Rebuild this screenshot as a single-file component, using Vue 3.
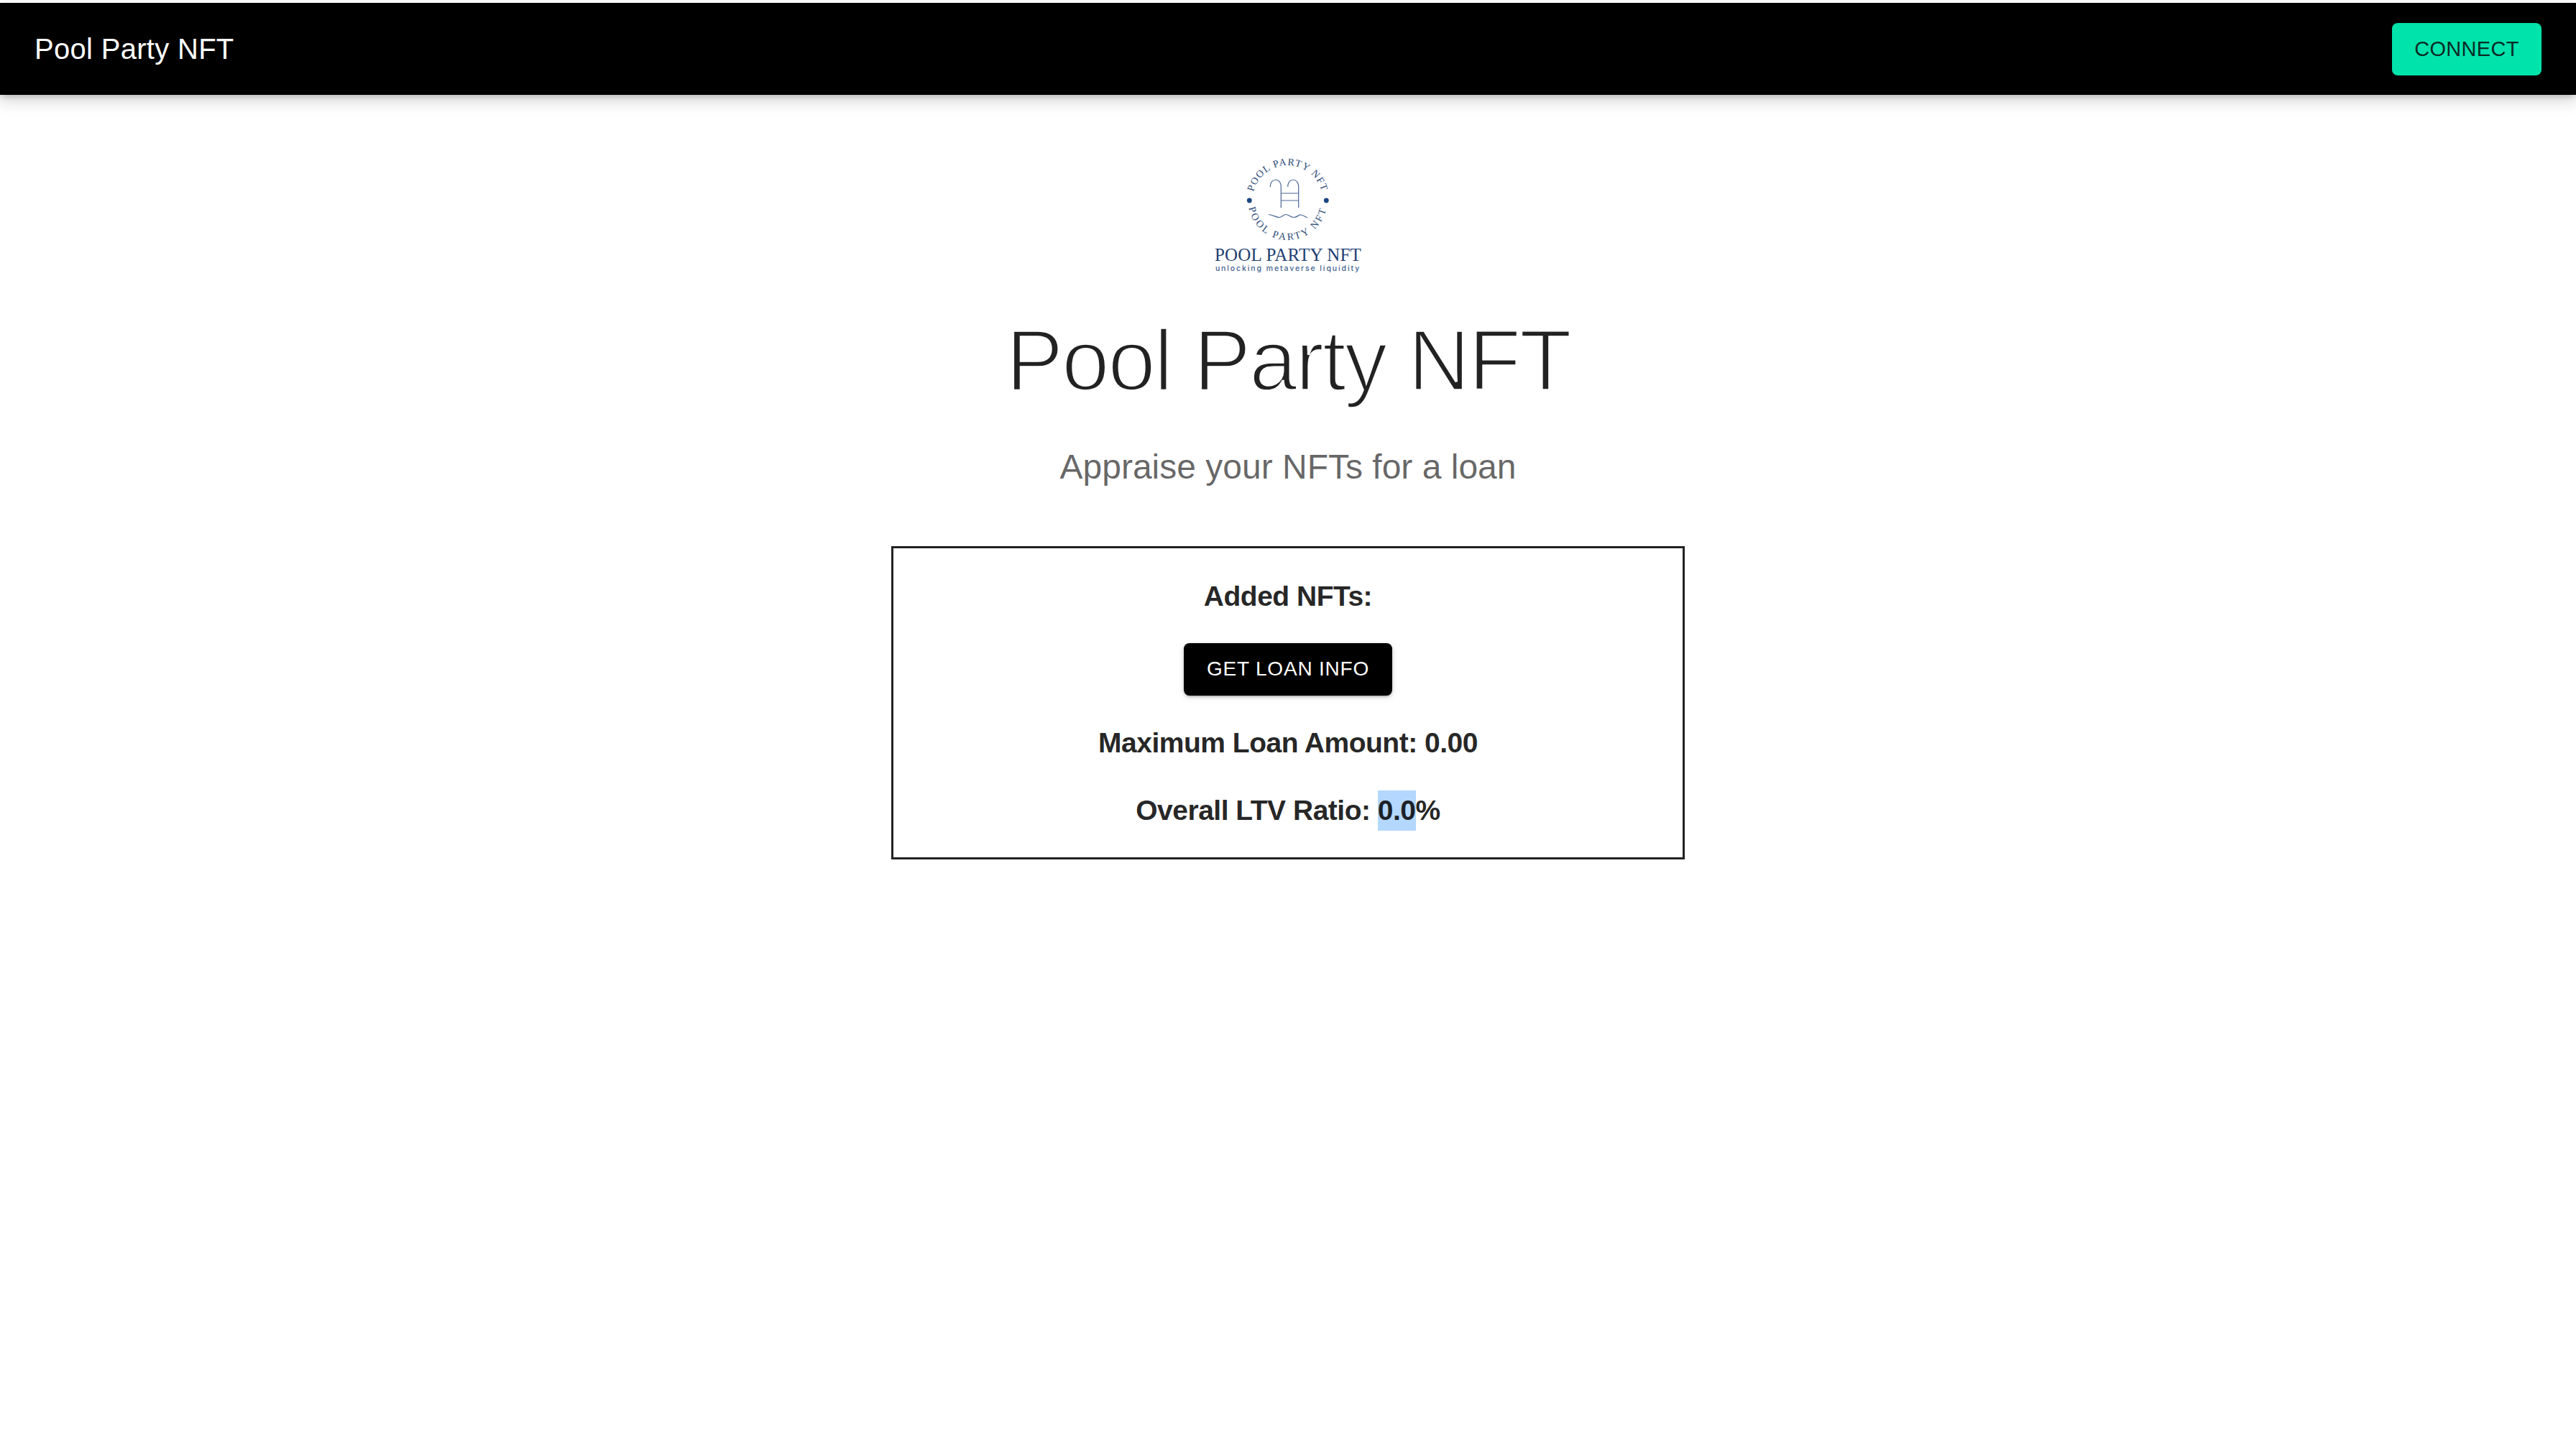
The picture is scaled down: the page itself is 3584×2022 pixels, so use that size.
<script setup>
const title = 'Pool Party NFT'
const maxLoan = '0.00'
const ltv = '0.0'
</script>

<template>
  <div class="page">
    <header class="appbar">
      <span class="brand">{{ title }}</span>
      <button class="connect">CONNECT</button>
    </header>

    <main class="content">
      <svg class="logo" viewBox="2 0 260 190" role="img" aria-label="Pool Party NFT logo">
        <defs>
          <path id="arcTop" d="M 84.4 65.5 A 49 49 0 0 1 178.6 65.5" />
          <path id="arcBottom" d="M 77.7 90.4 A 55 55 0 0 0 185.3 90.4" />
        </defs>
        <text class="ring"><textPath href="#arcTop" startOffset="50%" text-anchor="middle">POOL PARTY NFT</textPath></text>
        <text class="ring wide"><textPath href="#arcBottom" startOffset="50%" text-anchor="middle">POOL PARTY NFT</textPath></text>
        <circle cx="78.3" cy="79" r="3.4" class="dot" />
        <circle cx="185.3" cy="79" r="3.4" class="dot" />
        <g class="ladder">
          <path d="M107.3 60 C107.3 47 122.3 47 122.3 60 V89.3" />
          <path d="M131.7 60 C131.7 47 146.7 47 146.7 60 V89.3" />
          <path d="M122.3 69 H146.7 M122.3 79 H146.7" />
          <path d="M105 98.5 C112 99 114 102.5 120 102.5 C124 102.5 125 98.5 129 98.5 C133 98.5 135 102.5 140 102.5 C145 102.5 147 98.5 150 99 C153 99.5 155 101 159 103" />
        </g>
        <text class="logo-name" x="132" y="163">POOL PARTY NFT</text>
        <text class="logo-tag" x="132" y="176.5">unlocking metaverse liquidity</text>
      </svg>

      <h1 class="title">{{ title }}</h1>
      <p class="subtitle">Appraise your NFTs for a loan</p>

      <section class="panel">
        <h6 class="line first">Added NFTs:</h6>
        <button class="loan-btn">GET LOAN INFO</button>
        <h6 class="line amount">Maximum Loan Amount: {{ maxLoan }}</h6>
        <h6 class="line ratio">Overall LTV Ratio: <span class="selected">{{ ltv }}</span>%</h6>
      </section>
    </main>
  </div>
</template>

<style>
html, body {
  margin: 0;
  background: #fff;
}
</style>

<style scoped>
.page {
  min-height: 2022px;
  padding-top: 4px;
  box-sizing: border-box;
  font-family: "Liberation Sans", Arial, sans-serif;
  background: #fff;
}

.appbar {
  height: 128px;
  box-sizing: border-box;
  padding: 0 48px;
  display: flex;
  align-items: center;
  justify-content: space-between;
  background: #000;
  box-shadow: 0 4px 8px -2px rgba(0, 0, 0, 0.2), 0 8px 20px 2px rgba(0, 0, 0, 0.14);
}

.brand {
  color: #fff;
  font-size: 40px;
  letter-spacing: 0.3px;
}

.connect {
  width: 208px;
  height: 73px;
  border: 0;
  border-radius: 8px;
  background: #00e3ab;
  color: #0b2b26;
  font-family: inherit;
  font-size: 29px;
  letter-spacing: 0.3px;
}

.content {
  display: flex;
  flex-direction: column;
  align-items: center;
}

.logo {
  width: 260px;
  height: 190px;
  margin-top: 68px;
}

.ring {
  font-family: "Liberation Serif", serif;
  font-size: 14px;
  letter-spacing: 1.2px;
  fill: #2c4a78;
}

.wide {
  letter-spacing: 2.8px;
}

.dot {
  fill: #1c4680;
}

.ladder path {
  fill: none;
  stroke: #4a6894;
  stroke-width: 1.2;
}

.logo-name {
  font-family: "Liberation Serif", serif;
  font-size: 25px;
  letter-spacing: 0.2px;
  text-anchor: middle;
  fill: #1f3f73;
}

.logo-tag {
  font-family: Inter, sans-serif;
  font-size: 10.5px;
  font-weight: 500;
  letter-spacing: 1.9px;
  text-anchor: middle;
  fill: #3f5f8d;
}

/* liberation has no light cut, the white stroke thins it down */
.title {
  margin: 39px 0 0;
  font-size: 120px;
  line-height: 1.2;
  font-weight: 400;
  letter-spacing: -2.5px;
  color: #222;
  -webkit-text-stroke: 3.5px #fff;
}

.subtitle {
  margin: 48px 0 0;
  font-size: 48px;
  line-height: 1.2;
  color: rgba(0, 0, 0, 0.6);
}

.panel {
  width: 1104px;
  height: 436px;
  margin-top: 81px;
  box-sizing: border-box;
  border: 3px solid #222;
  display: flex;
  flex-direction: column;
  align-items: center;
}

.line {
  margin: 0;
  font-size: 39px;
  line-height: 56px;
  font-weight: 700;
  letter-spacing: -0.5px;
  color: rgba(0, 0, 0, 0.87);
}

.first {
  margin-top: 39px;
}

.amount {
  margin-top: 38px;
}

.ratio {
  margin-top: 38px;
}

.selected {
  display: inline-block;
  background: #b3d7ff;
}

.loan-btn {
  width: 290px;
  height: 73px;
  margin-top: 37px;
  border: 0;
  border-radius: 8px;
  background: #000;
  color: #fff;
  font-family: inherit;
  font-size: 28px;
  letter-spacing: 0.8px;
  box-shadow: 0 3px 2px -2px rgba(0, 0, 0, 0.2), 0 2px 4px 0 rgba(0, 0, 0, 0.14), 0 2px 10px 0 rgba(0, 0, 0, 0.12);
}
</style>
